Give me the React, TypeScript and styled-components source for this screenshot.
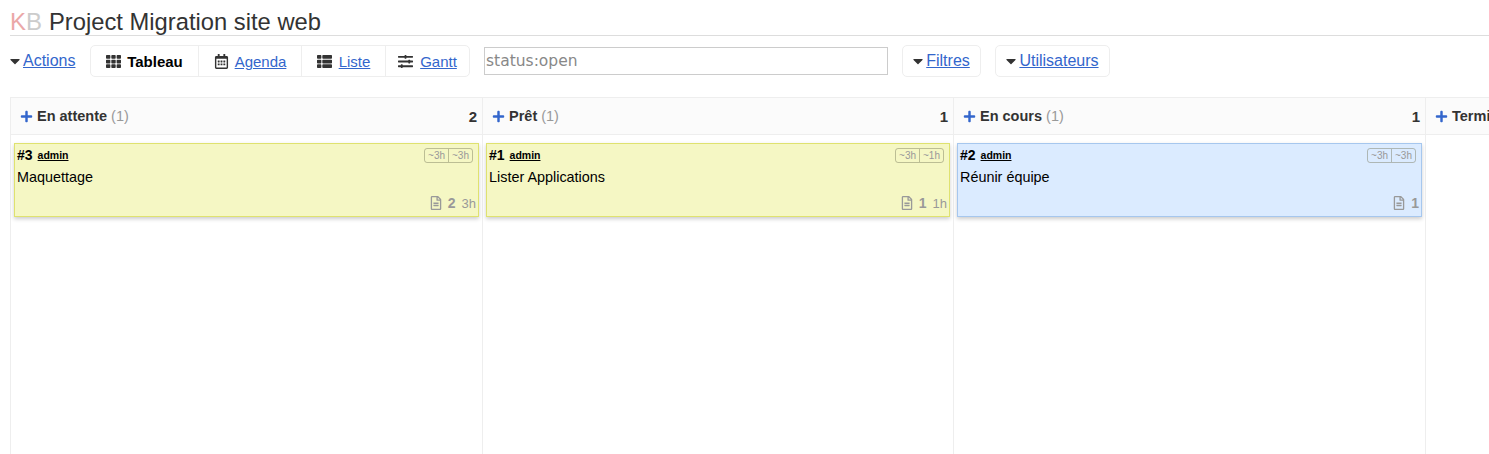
import React from "react";
import styled, { createGlobalStyle } from "styled-components";
import { FaTh, FaRegCalendarAlt, FaThList, FaSlidersH, FaPlus, FaRegFileAlt, FaCaretDown } from "react-icons/fa";

const Global = createGlobalStyle`
  html, body { margin: 0; padding: 0; background: #fff; overflow: hidden; }
  body { font-family: "Liberation Sans", Arial, sans-serif; color: #333; width: 1489px; height: 454px; }
`;
const Page = styled.div`
  width: 1489px; height: 454px; overflow: hidden; padding-left: 10px; box-sizing: border-box;
`;
const Header = styled.h1`
  margin: 0; height: 36px; box-sizing: border-box; padding-top: 8px; border-bottom: 1px solid #ddd;
  font-size: 23.75px; line-height: 27px; font-weight: 400; color: #333; white-space: nowrap;
`;
const Logo = styled.span`
  color: #ccc; margin-right: 7px; font-size: 24px;
  & b { font-weight: 400; color: #eba8a8; }
`;
const Toolbar = styled.div`
  display: flex; align-items: center; height: 32px; margin-top: 9px;
`;
const Link = styled.a<{ $small?: boolean }>`
  color: #36c; text-decoration: underline; font-size: ${p => (p.$small ? 15 : 16)}px;
`;
const Caret = styled(FaCaretDown)`
  width: 10px; height: 16px; color: #333; margin-right: 3px; flex: none;
`;
const Actions = styled.div`
  display: flex; align-items: center; width: 80px;
`;
const Views = styled.div`
  display: flex; height: 32px; box-sizing: border-box; border: 1px solid #eee; border-radius: 5px; margin-right: 14px;
`;
const View = styled.div<{ $w: number; $gap: number }>`
  display: flex; align-items: center; justify-content: center; gap: ${p => p.$gap}px; width: ${p => p.$w}px;
  border-right: 1px solid #eee; box-sizing: border-box;
  &:last-child { border-right: none; }
  & svg { width: 15px; height: 15px; color: #333; flex: none; }
  & strong { font-size: 15px; color: #000; }
`;
const Search = styled.input`
  width: 404px; height: 28px; box-sizing: border-box; border: 1px solid #ccc; padding: 0 1px;
  font-family: "DejaVu Sans", sans-serif; font-size: 15.5px; color: #888; outline: none; margin-right: 14px; background: #fff;
  &::placeholder { color: #888; opacity: 1; }
`;
const Drop = styled.div<{ $w: number }>`
  display: flex; align-items: center; justify-content: center; height: 32px; width: ${p => p.$w}px; box-sizing: border-box;
  border: 1px solid #eee; border-radius: 5px; margin-right: 14px;
`;
const Board = styled.div`
  margin-top: 20px; display: flex; border-left: 1px solid #eee; width: 1600px; height: 400px; border-top: 1px solid #eee;
`;
const Column = styled.div<{ $w: number }>`
  width: ${p => p.$w}px; flex: none; box-sizing: border-box; border-right: 1px solid #eee;
`;
const ColHead = styled.div`
  display: flex; align-items: center; justify-content: space-between; height: 37px; box-sizing: border-box;
  background: #fbfbfb; border-bottom: 1px solid #eee; padding: 0 5px 0 9px; font-size: 14.5px; font-weight: 700;
`;
const ColTitle = styled.div`
  display: flex; align-items: center; white-space: nowrap; color: #333;
  & svg { width: 13px; height: 13px; color: #36c; margin-right: 4px; flex: none; }
  & span { font-weight: 400; color: #999; margin-left: 4px; }
`;
const ColCount = styled.div`
  font-size: 15px; color: #333;
`;
const Card = styled.div<{ $blue?: boolean }>`
  position: relative; margin: 8px 3px 0 3px; height: 74px; box-sizing: border-box; padding: 2px;
  background: ${p => (p.$blue ? "#dbebff" : "#f5f7c4")};
  border: 1px solid ${p => (p.$blue ? "#a6c7ee" : "#dfe26f")};
  box-shadow: 0 2px 4px rgba(0,0,0,.2); color: #000;
`;
const CardTop = styled.div`
  display: flex; align-items: center; height: 18px; font-size: 14px; font-weight: 700;
  & a { font-size: 10.5px; color: #000; text-decoration: underline; margin-left: 5px; }
`;
const Est = styled.div`
  position: absolute; top: 4px; right: 5px; display: flex; height: 15px; box-sizing: border-box;
  border: 1px solid rgba(120,120,90,.45); border-radius: 3px; font-size: 10px; line-height: 13px; color: #999;
  & span { padding: 0 3px; }
  & span + span { border-left: 1px solid rgba(120,120,90,.45); }
`;
const CardTitle = styled.div`
  font-size: 14.4px; line-height: 16px; margin-top: 5px;
`;
const CardFoot = styled.div`
  position: absolute; right: 2px; bottom: 5px; display: flex; align-items: center; gap: 6px; font-size: 13px; color: #999;
  & svg { width: 12px; height: 14px; color: #999; }
  & b { font-size: 14px; }
`;

const cols = [
  { w: 472, title: "En attente", n: 2, blue: false, id: "#3", name: "Maquettage", e: ["~3h", "~3h"], c: 2, t: "3h" },
  { w: 471, title: "Prêt", n: 1, blue: false, id: "#1", name: "Lister Applications", e: ["~3h", "~1h"], c: 1, t: "1h" },
  { w: 472, title: "En cours", n: 1, blue: true, id: "#2", name: "Réunir équipe", e: ["~3h", "~3h"], c: 1, t: "" },
];

export default function App() {
  return (
    <Page>
      <Global />
      <Header><Logo><b>K</b>B</Logo>Project Migration site web</Header>
      <Toolbar>
        <Actions><Caret /><Link>Actions</Link></Actions>
        <Views>
          <View $w={108} $gap={6}><FaTh /><strong>Tableau</strong></View>
          <View $w={103} $gap={6}><FaRegCalendarAlt /><Link $small>Agenda</Link></View>
          <View $w={84} $gap={7}><FaThList /><Link $small>Liste</Link></View>
          <View $w={83} $gap={7}><FaSlidersH /><Link $small>Gantt</Link></View>
        </Views>
        <Search placeholder="status:open" readOnly />
        <Drop $w={79}><Caret /><Link>Filtres</Link></Drop>
        <Drop $w={115}><Caret /><Link>Utilisateurs</Link></Drop>
      </Toolbar>
      <Board>
        {cols.map(c => (
          <Column key={c.id} $w={c.w}>
            <ColHead>
              <ColTitle><FaPlus />{c.title}<span>(1)</span></ColTitle>
              <ColCount>{c.n}</ColCount>
            </ColHead>
            <Card $blue={c.blue}>
              <CardTop>{c.id}<a>admin</a></CardTop>
              <Est><span>{c.e[0]}</span><span>{c.e[1]}</span></Est>
              <CardTitle>{c.name}</CardTitle>
              <CardFoot><FaRegFileAlt /><b>{c.c}</b>{c.t && <span>{c.t}</span>}</CardFoot>
            </Card>
          </Column>
        ))}
        <Column $w={300}>
          <ColHead><ColTitle><FaPlus />Terminé<span>(0)</span></ColTitle></ColHead>
        </Column>
      </Board>
    </Page>
  );
}
